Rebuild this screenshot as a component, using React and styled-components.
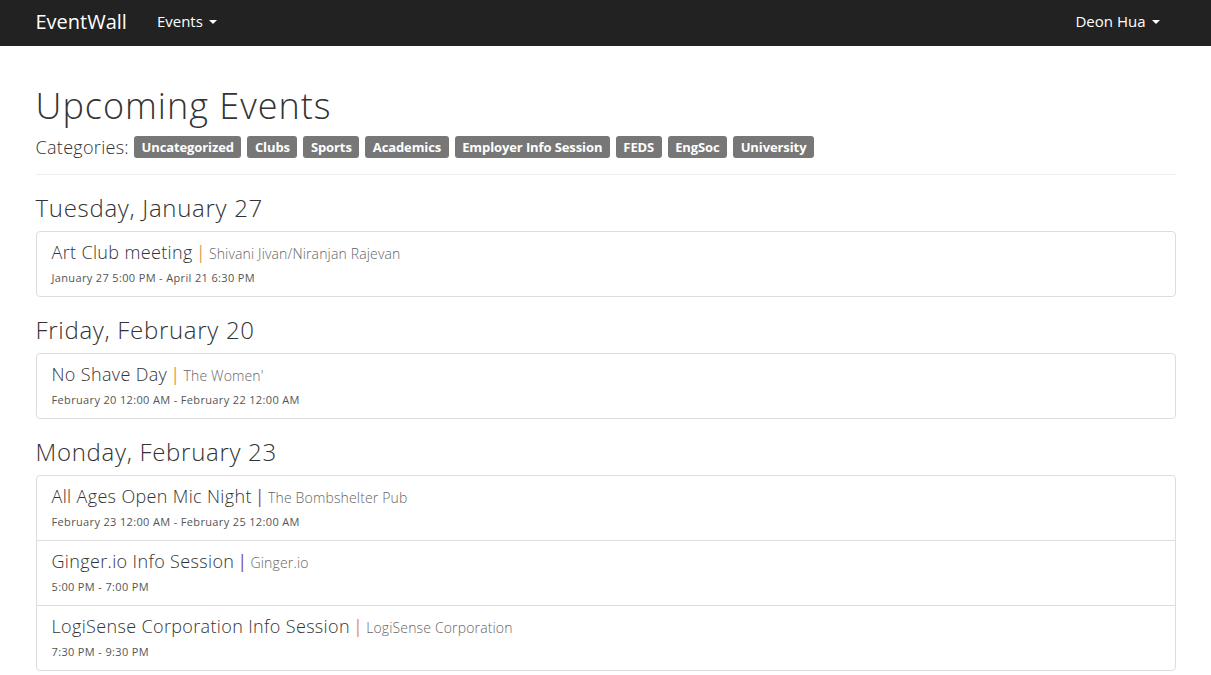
import styled, { createGlobalStyle } from 'styled-components'

const GlobalStyle = createGlobalStyle`
  html, body {
    margin: 0;
    padding: 0;
    background: #fff;
    font-family: 'Open Sans', Lato, 'Liberation Sans', sans-serif;
    color: #333;
  }
  * {
    box-sizing: border-box;
  }
`

const categories = [
  'Uncategorized',
  'Clubs',
  'Sports',
  'Academics',
  'Employer Info Session',
  'FEDS',
  'EngSoc',
  'University',
]

const days = [
  {
    date: 'Tuesday, January 27',
    events: [
      {
        title: 'Art Club meeting',
        host: 'Shivani Jivan/Niranjan Rajevan',
        time: 'January 27 5:00 PM - April 21 6:30 PM',
        accent: '#e0a050',
      },
    ],
  },
  {
    date: 'Friday, February 20',
    events: [
      {
        title: 'No Shave Day',
        host: "The Women'",
        time: 'February 20 12:00 AM - February 22 12:00 AM',
        accent: '#e0a050',
      },
    ],
  },
  {
    date: 'Monday, February 23',
    events: [
      {
        title: 'All Ages Open Mic Night',
        host: 'The Bombshelter Pub',
        time: 'February 23 12:00 AM - February 25 12:00 AM',
        accent: '#8e3f9e',
      },
      {
        title: 'Ginger.io Info Session',
        host: 'Ginger.io',
        time: '5:00 PM - 7:00 PM',
        accent: '#6f4fa0',
      },
      {
        title: 'LogiSense Corporation Info Session',
        host: 'LogiSense Corporation',
        time: '7:30 PM - 9:30 PM',
        accent: '#e39a3c',
      },
    ],
  },
]

const Caret = () => (
  <svg width='8' height='4' viewBox='0 0 8 4'>
    <path d='M0 0 L8 0 L4 4 Z' fill='currentColor' />
  </svg>
)

const App = () => {
  return (
    <>
      <GlobalStyle />
      <Navbar>
        <NavInner>
          <NavLeft>
            <Brand>EventWall</Brand>
            <NavLink>
              Events <Caret />
            </NavLink>
          </NavLeft>
          <NavLink>
            Deon Hua <Caret />
          </NavLink>
        </NavInner>
      </Navbar>
      <Container>
        <PageTitle>Upcoming Events</PageTitle>
        <CategoryRow>
          <CategoryLabel>Categories:</CategoryLabel>
          {categories.map((c) => (
            <Tag key={c}>{c}</Tag>
          ))}
        </CategoryRow>
        <Rule />
        {days.map((day) => (
          <section key={day.date}>
            <DayHeading>{day.date}</DayHeading>
            <ListGroup>
              {day.events.map((ev) => (
                <Item key={ev.title}>
                  <ItemTitle>
                    {ev.title}
                    <Sep $color={ev.accent}>|</Sep>
                    <Host>{ev.host}</Host>
                  </ItemTitle>
                  <Time>{ev.time}</Time>
                </Item>
              ))}
            </ListGroup>
          </section>
        ))}
      </Container>
    </>
  )
}

const Navbar = styled.nav`
  background: #222;
  height: 46px;
`

const NavInner = styled.div`
  width: 1140px;
  margin: 0 auto;
  height: 100%;
  padding-bottom: 4px;
  display: flex;
  align-items: center;
  justify-content: space-between;
`

const NavLeft = styled.div`
  display: flex;
  align-items: center;
  gap: 30px;
`

const Brand = styled.a`
  color: #fff;
  font-size: 20px;
  font-weight: 400;
`

const NavLink = styled.a`
  color: #fff;
  font-size: 15px;
  display: flex;
  align-items: center;
  gap: 6px;
  margin-right: 16px;
  svg {
    margin-top: 2px;
  }
`

const Container = styled.main`
  width: 1140px;
  margin: 0 auto;
  padding-top: 40px;
`

const PageTitle = styled.h1`
  font-size: 36px;
  font-weight: 300;
  line-height: 40px;
  margin: 0 0 10px;
  color: #333;
  letter-spacing: 1px;
`

const CategoryRow = styled.div`
  display: flex;
  align-items: center;
  gap: 6px;
  height: 22px;
`

const CategoryLabel = styled.span`
  font-size: 18px;
  font-weight: 300;
  color: #333;
  letter-spacing: 0.3px;
  margin-right: -1px;
`

const Tag = styled.span`
  background: #777;
  color: #fff;
  font-weight: 700;
  font-size: 13px;
  line-height: 22px;
  height: 22px;
  padding: 0 7.5px;
  border-radius: 3px;
  letter-spacing: -0.1px;
`

const Rule = styled.hr`
  border: 0;
  border-top: 1px solid #eee;
  margin: 16px 0 0;
`

const DayHeading = styled.h3`
  font-size: 24px;
  font-weight: 300;
  line-height: 26px;
  margin: 20px 0 10px;
  color: #333;
  letter-spacing: 0.7px;
`

const ListGroup = styled.div`
  border: 1px solid #ddd;
  border-radius: 4px;
  margin-bottom: 20px;
`

const Item = styled.div`
  height: 64px;
  padding: 9px 15px 0;
  & + & {
    height: 65px;
    border-top: 1px solid #ddd;
  }
`

const ItemTitle = styled.h4`
  display: flex;
  align-items: baseline;
  margin: 0 0 4px;
  font-size: 18px;
  font-weight: 300;
  line-height: 22px;
  color: #333;
  letter-spacing: 0.35px;
`

const Sep = styled.span`
  color: ${(p) => p.$color};
  font-weight: 400;
  margin: 0 3px 0 3px;
`

const Host = styled.small`
  font-size: 14px;
  font-weight: 300;
  color: #666;
  letter-spacing: 0.15px;
`

const Time = styled.div`
  font-size: 11px;
  line-height: 18px;
  color: #555;
  letter-spacing: 0.35px;
`

export default App
